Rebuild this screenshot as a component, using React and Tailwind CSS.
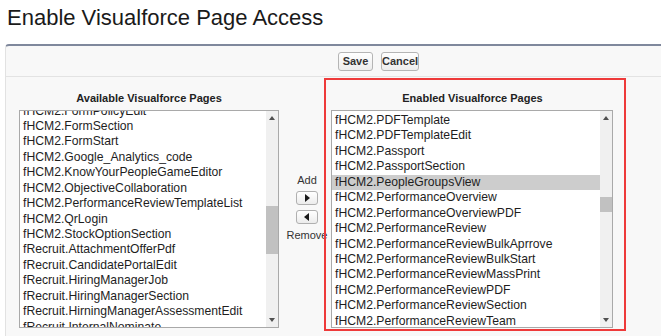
import React from "react";

const available = [
  "fHCM2.FormPolicyEdit",
  "fHCM2.FormSection",
  "fHCM2.FormStart",
  "fHCM2.Google_Analytics_code",
  "fHCM2.KnowYourPeopleGameEditor",
  "fHCM2.ObjectiveCollaboration",
  "fHCM2.PerformanceReviewTemplateList",
  "fHCM2.QrLogin",
  "fHCM2.StockOptionSection",
  "fRecruit.AttachmentOfferPdf",
  "fRecruit.CandidatePortalEdit",
  "fRecruit.HiringManagerJob",
  "fRecruit.HiringManagerSection",
  "fRecruit.HirningManagerAssessmentEdit",
  "fRecruit.InternalNominate",
];

const enabled = [
  "fHCM2.PDFTemplate",
  "fHCM2.PDFTemplateEdit",
  "fHCM2.Passport",
  "fHCM2.PassportSection",
  "fHCM2.PeopleGroupsView",
  "fHCM2.PerformanceOverview",
  "fHCM2.PerformanceOverviewPDF",
  "fHCM2.PerformanceReview",
  "fHCM2.PerformanceReviewBulkAprrove",
  "fHCM2.PerformanceReviewBulkStart",
  "fHCM2.PerformanceReviewMassPrint",
  "fHCM2.PerformanceReviewPDF",
  "fHCM2.PerformanceReviewSection",
  "fHCM2.PerformanceReviewTeam",
];

// fake native scrollbar on the right of a select box
function Scrollbar({ thumbTop, thumbHeight }) {
  return (
    <div className="w-[12px] flex flex-col items-center bg-[#f0f0f0]">
      <div className="h-[14px] flex items-center justify-center">
        <div className="w-0 h-0 border-l-[3.5px] border-r-[3.5px] border-b-[4px] border-l-transparent border-r-transparent border-b-[#505050]" />
      </div>
      <div className="flex-1 w-full">
        <div
          className="w-full bg-[#c1c1c1]"
          style={{ marginTop: thumbTop, height: thumbHeight }}
        />
      </div>
      <div className="h-[14px] flex items-center justify-center">
        <div className="w-0 h-0 border-l-[3.5px] border-r-[3.5px] border-t-[4px] border-l-transparent border-r-transparent border-t-[#505050]" />
      </div>
    </div>
  );
}

function ListBox({ items, width, offset, selected, thumbTop, thumbHeight }) {
  return (
    <div
      className="h-[218px] border border-[#a9a9a9] bg-white flex overflow-hidden"
      style={{ width }}
    >
      <div className="flex-1 overflow-hidden">
        <div style={{ marginTop: offset }}>
          {items.map((item) => (
            <div
              key={item}
              className={`h-[15.45px] leading-[15.45px] pl-[3px] text-[12.2px] text-[#1e1e1e] whitespace-nowrap ${
                item === selected ? "bg-[#cdcdcd]" : ""
              }`}
            >
              {item}
            </div>
          ))}
        </div>
      </div>
      <Scrollbar thumbTop={thumbTop} thumbHeight={thumbHeight} />
    </div>
  );
}

function ArrowButton({ dir }) {
  return (
    <div className="w-[22px] h-[14px] border border-[#b0b0b0] rounded-[3px] bg-gradient-to-b from-white to-[#ececec] flex items-center justify-center">
      {dir === "right" ? (
        <div className="ml-[1px] w-0 h-0 border-t-[4px] border-b-[4px] border-l-[5px] border-t-transparent border-b-transparent border-l-[#1a1a1a]" />
      ) : (
        <div className="mr-[1px] w-0 h-0 border-t-[4px] border-b-[4px] border-r-[5px] border-t-transparent border-b-transparent border-r-[#1a1a1a]" />
      )}
    </div>
  );
}

export default function App() {
  return (
    <div className="w-[661px] h-[336px] bg-white overflow-hidden font-['Liberation_Sans',Arial,sans-serif] flex flex-col">
      <h1 className="pl-[7px] pt-[4px] text-[22px] leading-[28px] text-[#1a1a1a]">
        Enable Visualforce Page Access
      </h1>

      <div className="mt-[12px] ml-[5px] flex-1 bg-[#f8f8f8] border-t-[2px] border-l border-t-[#7f889c] border-l-[#e2e2e2] rounded-tl-[4px]">
        {/* Button row */}
        <div className="h-[31px] border-b border-[#e3e3e3] flex items-center pl-[332px] gap-[8px]">
          <button className="w-[35px] h-[19px] border border-[#b5b5b5] rounded-[3px] bg-gradient-to-b from-white to-[#ededed] text-[11px] font-bold text-[#333]">
            Save
          </button>
          <button className="w-[38px] h-[19px] border border-[#b5b5b5] rounded-[3px] bg-gradient-to-b from-white to-[#ededed] text-[11px] font-bold text-[#333]">
            Cancel
          </button>
        </div>

        <div className="flex">
          {/* Available */}
          <div className="pl-[13px] w-[273px]">
            <div className="mt-[13px] h-[16px] leading-[16px] text-center text-[11px] font-bold text-[#222]">
              Available Visualforce Pages
            </div>
            <div className="mt-[4px]">
              <ListBox
                items={available}
                width={260}
                offset={-7.5}
                thumbTop={81}
                thumbHeight={48}
              />
            </div>
          </div>

          {/* Add / Remove */}
          <div className="w-[45px] flex flex-col items-center pt-[96px]">
            <div className="ml-[11px] flex flex-col items-center text-[11px] text-[#333]">
              <div className="h-[14px] leading-[14px]">Add</div>
              <div className="mt-[4px]">
                <ArrowButton dir="right" />
              </div>
              <div className="mt-[5px]">
                <ArrowButton dir="left" />
              </div>
              <div className="h-[14px] leading-[14px] mt-[4px] whitespace-nowrap">Remove</div>
            </div>
          </div>

          {/* Enabled (highlighted) */}
          <div className="mt-[1px] w-[302px] h-[253px] border-2 border-[#ee3a3a] pl-[5px] pt-[10px]">
            <div className="h-[16px] leading-[16px] text-center text-[11px] font-bold text-[#222] pr-[10px]">
              Enabled Visualforce Pages
            </div>
            <div className="mt-[4px]">
              <ListBox
                items={enabled}
                width={282}
                offset={2}
                selected="fHCM2.PeopleGroupsView"
                thumbTop={72}
                thumbHeight={15}
              />
            </div>
          </div>
        </div>
      </div>
    </div>
  );
}
